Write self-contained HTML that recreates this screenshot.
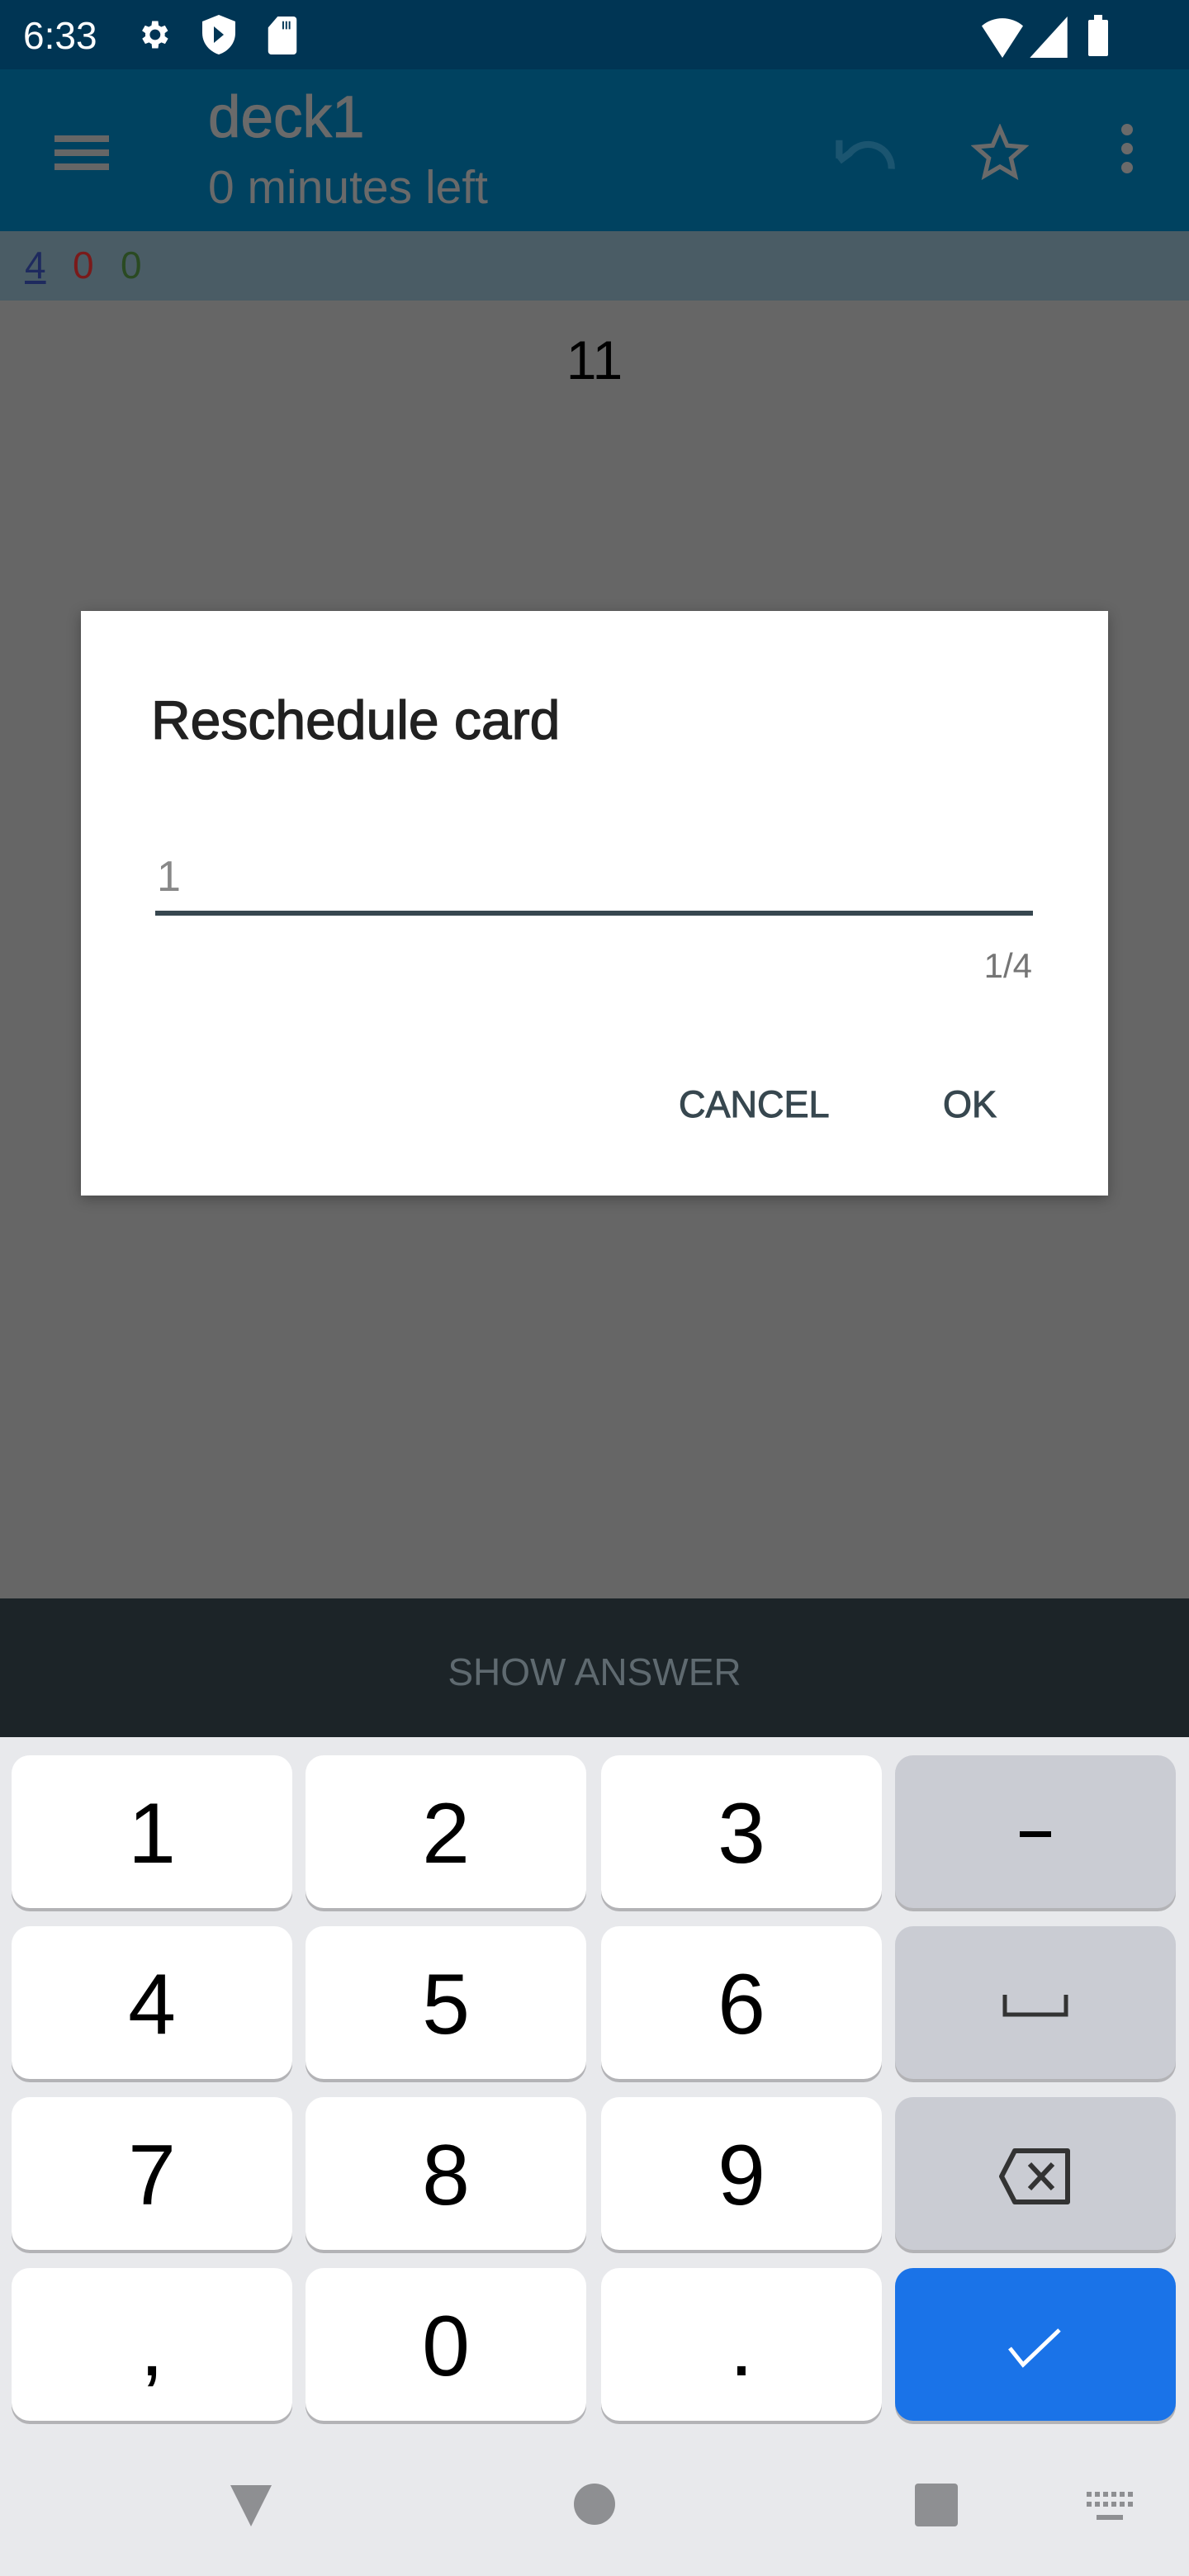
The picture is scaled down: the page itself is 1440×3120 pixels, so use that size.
<!DOCTYPE html>
<html><head><meta charset="utf-8"><style>
*{margin:0;padding:0;box-sizing:border-box}
body{width:1440px;height:3120px;position:relative;background:#666;font-family:"Liberation Sans",sans-serif;overflow:hidden}
.a{position:absolute}
.key{position:absolute;width:340px;height:185px;background:#fff;border-radius:22px;box-shadow:0 4px 0 #b3b3b6;display:flex;align-items:center;justify-content:center;font-size:104px;color:#000;padding-top:6px}
.g{background:#caccd3}
</style></head><body>
<div class="a" style="left:0;top:0;width:1440px;height:84px;background:#003554"></div>
<div class="a" style="left:28px;top:16px;font-size:46px;color:#fff">6:33</div>
<svg class="a" style="left:164px;top:20px" width="44" height="44" viewBox="0 0 24 24"><path fill="#fff" d="M19.4 13a7.5 7.5 0 000-2l2.1-1.6-2-3.5-2.5 1a7 7 0 00-1.7-1L15 3h-4l-.4 2.9a7 7 0 00-1.7 1l-2.5-1-2 3.5L6.6 11a7.5 7.5 0 000 2l-2.1 1.6 2 3.5 2.5-1a7 7 0 001.7 1L11 21h4l.4-2.9a7 7 0 001.7-1l2.5 1 2-3.5zM13 15.5a3.5 3.5 0 110-7 3.5 3.5 0 010 7z"/></svg>
<svg class="a" style="left:244px;top:18px" width="42" height="48" viewBox="0 0 20 24"><path fill="#fff" d="M10 0L0 4v7c0 6 4 11 10 13 6-2 10-7 10-13V4z"/><path fill="#003554" d="M7 7l6 5-6 5z"/></svg>
<svg class="a" style="left:322px;top:20px" width="40" height="46" viewBox="0 0 18 24"><path fill="#fff" d="M6 0h10a2 2 0 012 2v20a2 2 0 01-2 2H2a2 2 0 01-2-2V7z"/><path fill="#003554" d="M9 3h1v5H9zM11 3h1v5h-1zM13 3h1v5h-1z"/></svg>
<svg class="a" style="left:1186px;top:20px" width="56" height="50" viewBox="0 0 24 22"><path fill="#fff" d="M12 22L1 5a17 17 0 0122 0z"/></svg>
<svg class="a" style="left:1246px;top:20px" width="48" height="50" viewBox="0 0 20 22"><path fill="#fff" d="M20 0v22H0z"/></svg>
<div class="a" style="left:1318px;top:24px;width:24px;height:44px;background:#fff;border-radius:2px"></div>
<div class="a" style="left:1325px;top:18px;width:10px;height:8px;background:#fff"></div>

<div class="a" style="left:0;top:84px;width:1440px;height:196px;background:#004260"></div>
<div class="a" style="left:66px;top:164px;width:66px;height:8px;background:#666"></div>
<div class="a" style="left:66px;top:181px;width:66px;height:8px;background:#666"></div>
<div class="a" style="left:66px;top:198px;width:66px;height:8px;background:#666"></div>
<div class="a" style="left:252px;top:102px;font-size:71px;color:#6a6a6a;-webkit-text-stroke:1px #6a6a6a">deck1</div>
<div class="a" style="left:252px;top:194px;font-size:57px;color:#6a6a6a">0 minutes left</div>
<svg class="a" style="left:1010px;top:160px" width="76" height="48" viewBox="0 0 24 15"><path fill="none" stroke="#1b5570" stroke-width="2.6" d="M2 3v7M22 14a9 9 0 00-16-6l-4 3"/></svg>
<svg class="a" style="left:1176px;top:150px" width="70" height="70" viewBox="0 0 24 24"><path fill="none" stroke="#6a6a6a" stroke-width="1.8" d="M12 2l3 7 7 .6-5.4 4.7 1.7 7.2L12 17.8 5.7 21.5l1.7-7.2L2 9.6 9 9z"/></svg>
<div class="a" style="left:1358px;top:150px;width:14px;height:14px;border-radius:50%;background:#6a6a6a;box-shadow:0 23px 0 #6a6a6a,0 46px 0 #6a6a6a"></div>

<div class="a" style="left:0;top:280px;width:1440px;height:84px;background:#4a5c65"></div>
<div class="a" style="left:30px;top:294px;font-size:46px;color:#1e2a5e;text-decoration:underline">4</div>
<div class="a" style="left:88px;top:294px;font-size:46px;color:#7a1a1a">0</div>
<div class="a" style="left:146px;top:294px;font-size:46px;color:#2a4a22">0</div>

<div class="a" style="left:0;top:398px;width:1440px;text-align:center;font-size:66px;color:#000">11</div>

<div class="a" style="left:98px;top:740px;width:1244px;height:708px;background:#fff;box-shadow:0 4px 16px rgba(0,0,0,.3)"></div>
<div class="a" style="left:183px;top:834px;font-size:66px;color:#212121;-webkit-text-stroke:1.3px #212121">Reschedule card</div>
<div class="a" style="left:190px;top:1032px;font-size:52px;color:#888">1</div>
<div class="a" style="left:188px;top:1103px;width:1063px;height:6px;background:#37474f"></div>
<div class="a" style="left:1050px;top:1146px;width:200px;text-align:right;font-size:42px;color:#757575">1/4</div>
<div class="a" style="left:822px;top:1312px;font-size:45px;color:#37474f;-webkit-text-stroke:1px #37474f">CANCEL</div>
<div class="a" style="left:1142px;top:1312px;font-size:45px;color:#37474f;-webkit-text-stroke:1px #37474f">OK</div>

<div class="a" style="left:0;top:1936px;width:1440px;height:168px;background:#1c2428"></div>
<div class="a" style="left:0;top:1998px;width:1440px;text-align:center;font-size:46px;color:#5f6a70">SHOW ANSWER</div>

<div class="a" style="left:0;top:2104px;width:1440px;height:1016px;background:#e8e9ec"></div>
<div class="key" style="left:14px;top:2126px">1</div>
<div class="key" style="left:370px;top:2126px">2</div>
<div class="key" style="left:728px;top:2126px">3</div>
<div class="key g" style="left:1084px;top:2126px"><div style="width:38px;height:7px;background:#000"></div></div>
<div class="key" style="left:14px;top:2333px">4</div>
<div class="key" style="left:370px;top:2333px">5</div>
<div class="key" style="left:728px;top:2333px">6</div>
<div class="key g" style="left:1084px;top:2333px"><svg width="80" height="30" viewBox="0 0 80 30"><path fill="none" stroke="#333" stroke-width="5" d="M3 2v24h74V2"/></svg></div>
<div class="key" style="left:14px;top:2540px">7</div>
<div class="key" style="left:370px;top:2540px">8</div>
<div class="key" style="left:728px;top:2540px">9</div>
<div class="key g" style="left:1084px;top:2540px"><svg width="90" height="70" viewBox="0 0 90 70"><path fill="none" stroke="#333" stroke-width="6" stroke-linejoin="round" d="M20 4h64v62H20L4 35z"/><path stroke="#333" stroke-width="6" d="M38 20l28 30M66 20L38 50"/></svg></div>
<div class="key" style="left:14px;top:2747px">,</div>
<div class="key" style="left:370px;top:2747px">0</div>
<div class="key" style="left:728px;top:2747px">.</div>
<div class="key" style="left:1084px;top:2747px;background:#1a73e8"><svg width="70" height="50" viewBox="0 0 70 50"><path fill="none" stroke="#fff" stroke-width="5" d="M4 26l16 20L64 4"/></svg></div>

<svg class="a" style="left:274px;top:3005px" width="60" height="60" viewBox="0 0 24 24"><path fill="#8e8f92" d="M2 2h20L12 22z"/></svg>
<div class="a" style="left:695px;top:3008px;width:50px;height:50px;border-radius:50%;background:#8e8f92"></div>
<div class="a" style="left:1108px;top:3008px;width:52px;height:52px;border-radius:4px;background:#8e8f92"></div>
<svg class="a" style="left:1316px;top:3018px" width="56" height="40" viewBox="0 0 56 40"><g fill="#8e8f92"><rect x="0" y="0" width="6" height="6"/><rect x="10" y="0" width="6" height="6"/><rect x="20" y="0" width="6" height="6"/><rect x="30" y="0" width="6" height="6"/><rect x="40" y="0" width="6" height="6"/><rect x="50" y="0" width="6" height="6"/><rect x="0" y="12" width="6" height="6"/><rect x="10" y="12" width="6" height="6"/><rect x="20" y="12" width="6" height="6"/><rect x="30" y="12" width="6" height="6"/><rect x="40" y="12" width="6" height="6"/><rect x="50" y="12" width="6" height="6"/><rect x="12" y="28" width="32" height="6"/></g></svg>
</body></html>
